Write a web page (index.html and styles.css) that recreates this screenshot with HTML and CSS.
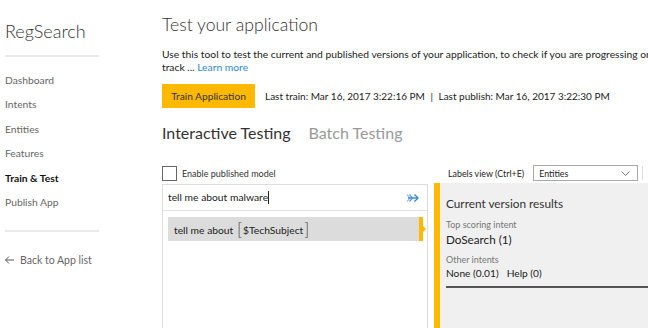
FILE: index.html
```html
<!DOCTYPE html>
<html>
<head>
  <title>RegSearch - Train &amp; Test</title>
  <link rel="stylesheet" href="styles.css">
</head>
<body>
  <div class="page">
    <aside class="sidebar">
      <div class="brand">RegSearch</div>
      <div class="divider top"></div>
      <nav class="nav">
        <a class="nav-item">Dashboard</a>
        <a class="nav-item">Intents</a>
        <a class="nav-item">Entities</a>
        <a class="nav-item">Features</a>
        <a class="nav-item active">Train &amp; Test</a>
        <a class="nav-item">Publish App</a>
      </nav>
      <div class="divider"></div>
      <a class="back">
        <svg class="back-arrow" width="9" height="8" viewBox="0 0 9 8"><path d="M0.5 4 H9 M4 0.5 L0.5 4 L4 7.5" fill="none" stroke="#555" stroke-width="1"/></svg>
        Back to App list
      </a>
    </aside>

    <main class="main">
      <h1>Test your application</h1>
      <p class="intro">Use this tool to test the current and published versions of your application, to check if you are progressing on the right track ... <a class="link">Learn more</a></p>

      <div class="train-row">
        <button class="train-btn">Train Application</button>
        <span class="train-info">Last train: Mar 16, 2017 3:22:16 PM <span class="pipe">|</span> Last publish: Mar 16, 2017 3:22:30 PM</span>
      </div>

      <div class="tabs">
        <span class="tab active">Interactive Testing</span>
        <span class="tab">Batch Testing</span>
      </div>

      <div class="test-area">
        <div class="left-col">
          <label class="check"><span class="box"></span>Enable published model</label>
          <div class="utter-panel">
            <div class="utter-input">
              <span class="typed">tell me about malware<span class="caret"></span></span>
              <svg class="send" width="13" height="10" viewBox="0 0 13 10">
                <path d="M1 1.5 L4 5 L1 8.5" fill="none" stroke="#9cc3ea" stroke-width="1.2"/>
                <path d="M3.5 1.5 L6.5 5 L3.5 8.5" fill="none" stroke="#5b9fe0" stroke-width="1.2"/>
                <path d="M2 5 H12" stroke="#2b7fd6" stroke-width="1.3"/>
                <path d="M8.5 1.5 L12 5 L8.5 8.5" fill="none" stroke="#2b7fd6" stroke-width="1.3"/>
              </svg>
            </div>
            <div class="utter-list">
              <div class="utter-item">tell me about <span class="bracket">[</span>$TechSubject<span class="bracket">]</span></div>
            </div>
          </div>
        </div>

        <div class="right-col">
          <div class="labels-row">
            <span class="labels-label">Labels view (Ctrl+E)</span>
            <div class="select">
              <span>Entities</span>
              <svg width="9" height="5" viewBox="0 0 9 5"><path d="M0.5 0.5 L4.5 4.5 L8.5 0.5" fill="none" stroke="#777" stroke-width="1"/></svg>
            </div>
            <span class="sep"></span>
          </div>
          <div class="results">
            <div class="results-body">
              <h2>Current version results</h2>
              <div class="caption">Top scoring intent</div>
              <div class="top-intent">DoSearch (1)</div>
              <div class="caption">Other intents</div>
              <div class="other-intents"><span>None (0.01)</span><span>Help (0)</span></div>
              <div class="rule"></div>
            </div>
          </div>
        </div>
      </div>
    </main>
  </div>
</body>
</html>
```

FILE: styles.css
```css
html, body {
  margin: 0;
  height: 100%;
  overflow: hidden;
}

body {
  font-family: Lato, "Open Sans", sans-serif;
  color: #333;
  background-color: #fff;
}

.page {
  display: flex;
  height: 100%;
}

/* sidebar */

.sidebar {
  width: 157px;
  flex: none;
  padding-left: 5px;
}

.brand {
  font-size: 18px;
  font-weight: 300;
  color: #333;
  margin-top: 19px;
  line-height: 24px;
}

.divider {
  width: 94px;
  height: 2px;
  background-color: #eaeaea;
}

.divider.top {
  margin-top: 12px;
}

.nav {
  display: flex;
  flex-direction: column;
  padding-top: 11px;
  padding-bottom: 16px;
}

.nav-item {
  font-size: 10.3px;
  line-height: 24.4px;
  color: #666;
}

.nav-item.active {
  color: #111;
  font-weight: bold;
}

.back {
  display: flex;
  align-items: center;
  margin-top: 21px;
  font-size: 10.5px;
  line-height: 14px;
  color: #666;
}

.back-arrow {
  margin-right: 6px;
}

/* main */

.main {
  flex: none;
  width: 720px;
}

h1 {
  font-size: 17.6px;
  font-weight: 300;
  color: #333;
  margin: 13px 0 0;
  line-height: 24px;
}

.intro {
  width: 550px;
  font-size: 10.3px;
  line-height: 13px;
  margin: 11px 0 0;
  color: #222;
}

.link {
  color: #2b88d8;
}

.train-row {
  display: flex;
  align-items: center;
  margin-top: 10px;
}

.train-btn {
  background-color: #ffb900;
  border: none;
  height: 24px;
  width: 93px;
  padding: 0;
  font-family: inherit;
  font-size: 10.2px;
  color: #333;
}

.train-info {
  margin-left: 10px;
  font-size: 10px;
  color: #222;
}

.pipe {
  margin: 0 3px;
}

.tabs {
  display: flex;
  gap: 18px;
  margin-top: 14px;
}

.tab {
  font-size: 16px;
  line-height: 22px;
  color: #999;
}

.tab.active {
  color: #333;
}

.test-area {
  display: grid;
  grid-template-columns: 266px 486px;
  gap: 6px;
  margin-top: 19px;
}

.check {
  display: flex;
  align-items: center;
  height: 21px;
  font-size: 9px;
  color: #333;
}

.box {
  width: 13px;
  height: 13px;
  border: 1px solid #666;
  margin-right: 5px;
}

.utter-panel {
  border: 1px solid #ddd;
  height: 200px;
}

.utter-input {
  display: flex;
  justify-content: space-between;
  align-items: center;
  height: 25px;
  padding: 0 8px 0 5px;
  border-bottom: 1px solid #e2e2e2;
  font-size: 10.3px;
  color: #222;
}

.caret {
  display: inline-block;
  width: 1px;
  height: 13px;
  background-color: #222;
  vertical-align: -3px;
}

.utter-list {
  padding: 6px 4px 0 5px;
}

.utter-item {
  position: relative;
  background-color: #dcdcdc;
  border-right: 4px solid #ffb900;
  height: 24px;
  line-height: 24px;
  padding-left: 6px;
  font-size: 10.3px;
  color: #222;
}

.utter-item::after {
  content: "";
  position: absolute;
  right: -7px;
  top: 9px;
  border-left: 3px solid #ffb900;
  border-top: 3px solid transparent;
  border-bottom: 3px solid transparent;
}

.bracket {
  font-size: 17px;
  font-weight: 300;
  color: #444;
  vertical-align: -1px;
  margin: 0 1px;
}

.labels-row {
  display: flex;
  align-items: center;
  height: 20px;
  padding-left: 14px;
}

.labels-label {
  font-size: 8.9px;
  color: #222;
  margin-right: 9px;
}

.select {
  display: flex;
  justify-content: space-between;
  align-items: center;
  width: 91px;
  height: 14px;
  padding: 0 7px 0 5px;
  border: 1px solid #aaa;
  font-size: 8.8px;
  color: #222;
}

.sep {
  width: 1px;
  height: 14px;
  background-color: #ddd;
  margin-left: 4px;
}

.results {
  border-left: 6px solid #ffb900;
  background-color: #f0f0f0;
  height: 200px;
}

.results-body {
  padding: 12px 0 0 6px;
}

h2 {
  font-size: 11.8px;
  font-weight: normal;
  color: #333;
  margin: 0 0 6px;
  line-height: 18px;
}

.caption {
  font-size: 9px;
  color: #777;
  line-height: 12px;
}

.top-intent {
  font-size: 11.7px;
  color: #222;
  line-height: 16px;
  margin-bottom: 7px;
}

.other-intents {
  display: flex;
  gap: 8px;
  font-size: 10.2px;
  color: #222;
  line-height: 14px;
}

.rule {
  height: 2px;
  background-color: #555;
  margin-top: 6px;
}
```
